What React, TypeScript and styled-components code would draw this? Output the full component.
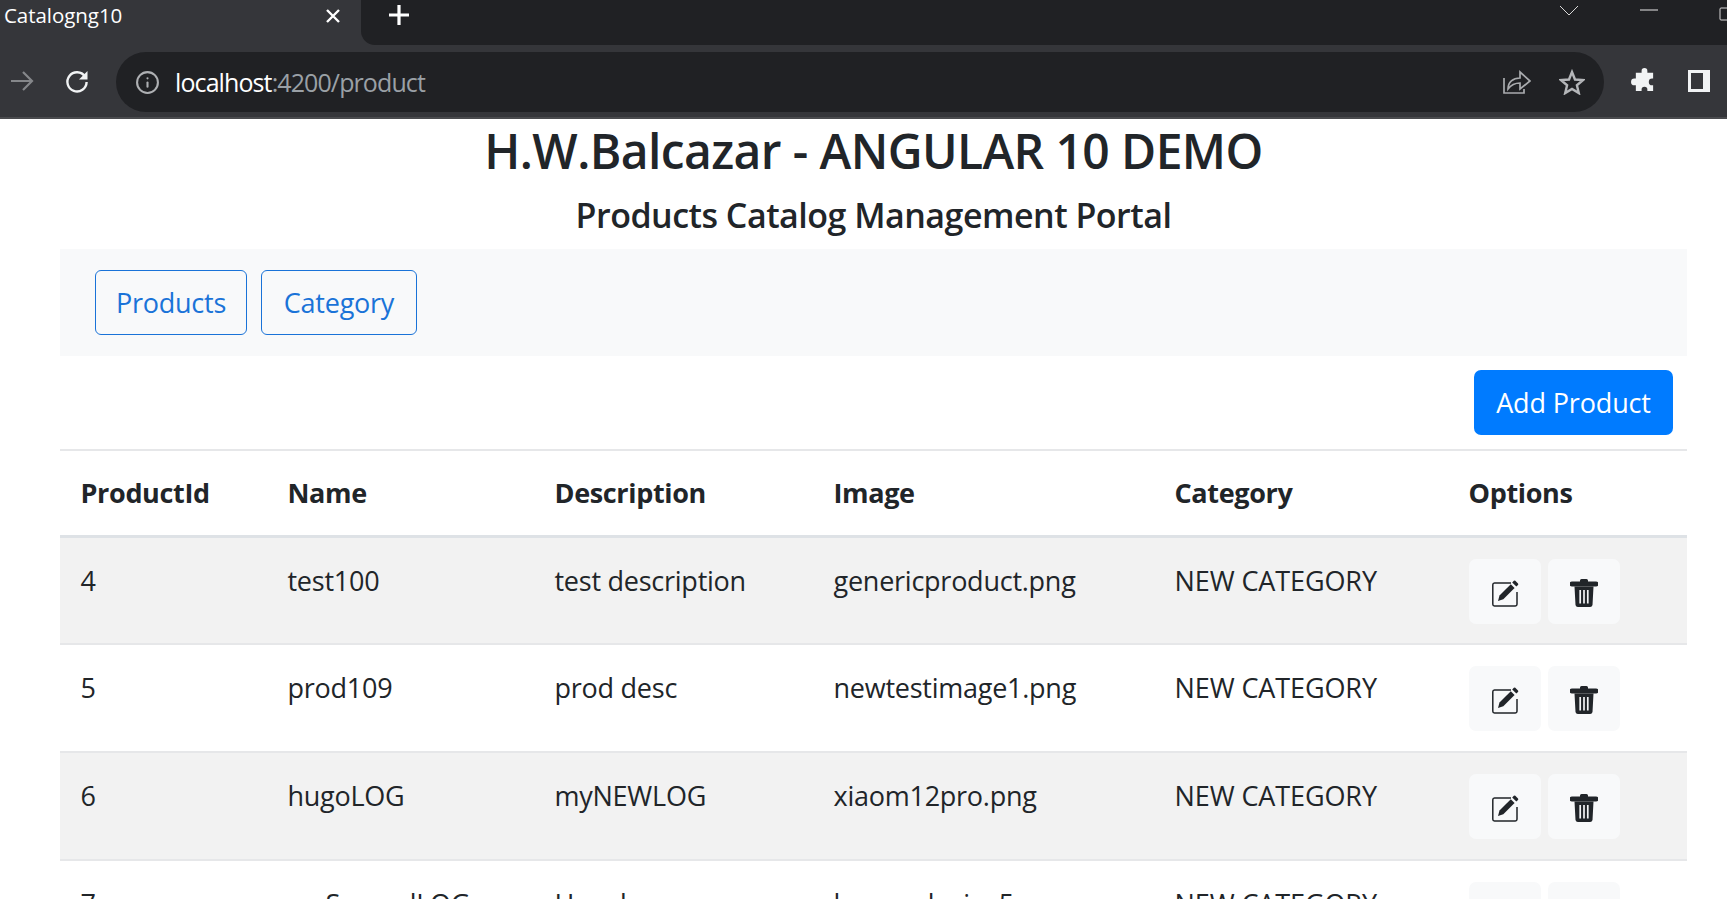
import React from "react";
import styled, { createGlobalStyle } from "styled-components";
import { FiInfo } from "react-icons/fi";

const Global = createGlobalStyle`
  html, body { margin: 0; padding: 0; height: 899px; overflow: hidden; background: #fff; }
  body { font-family: "Open Sans", "Noto Sans", "Liberation Sans", sans-serif; color: #212529; }
`;

const TabStrip = styled.div`
  display: flex; height: 45px; background: #35363a; color: #fff;
`;
const Tab = styled.div`
  width: 361px; display: flex; align-items: center; justify-content: space-between;
  padding: 0 20px 16px 4px; box-sizing: border-box; font-size: 20.500px; letter-spacing: -0.05px;
  svg { position: relative; top: 1px; }
`;
const StripRest = styled.div`
  flex: 1; background: #202124; border-bottom-left-radius: 14px;
  display: flex; align-items: flex-start; padding: 4px 0 0 27px;
  justify-content: space-between;
`;
const WindowControls = styled.div`
  display: flex; align-items: flex-start; gap: 61px; margin-right: -2px; padding-top: 1px;
`;
const Toolbar = styled.div`
  height: 74px; background: #35363a; border-bottom: 2px solid #4a4b4e;
  display: flex; align-items: flex-start; padding-top: 7px; box-sizing: border-box;
`;
const NavIcons = styled.div`
  width: 116px; display: flex; align-items: center; gap: 29px; padding: 16px 0 0 9px; box-sizing: border-box;
`;
const Omnibox = styled.div`
  width: 1488px; height: 60px; background: #202124; border-radius: 30px;
  display: flex; align-items: center; padding: 0 0 0 19px; box-sizing: border-box;
`;
const Url = styled.div`
  flex: 1; margin-left: 15px; font-size: 25px; letter-spacing: -0.9px; color: #9aa0a6;
  span { color: #fff; }
`;
const OmniActions = styled.div`
  display: flex; align-items: center; gap: 28px; padding-right: 19px;
`;
const ExtIcons = styled.div`
  display: flex; align-items: center; gap: 29px; padding: 16px 0 0 27px;
`;

const Page = styled.main`
  padding: 0 40px 0 60px;
`;
const Title = styled.h1`
  margin: 0 0 11px; height: 64px; line-height: 64px; text-align: center; font-size: 48px; font-weight: 600;
  letter-spacing: -0.6px; color: #212529;
`;
const Subtitle = styled.h4`
  margin: 0; height: 42px; line-height: 42px; text-align: center; font-size: 34px; font-weight: 600;
  letter-spacing: -0.5px; color: #212529;
`;
const NavBar = styled.nav`
  display: flex; gap: 14px; padding: 21px 35px; background: #f8f9fa; margin-top: 13px;
`;
const NavButton = styled.button<{ $w: number }>`
  width: ${(p) => p.$w}px; height: 65px; background: transparent; border: 1.1px solid #1a73d8;
  border-radius: 6px; color: #1a73d8; font: inherit; font-size: 27px; padding: 0;
  letter-spacing: -0.25px;
`;
const ActionBar = styled.div`
  display: flex; justify-content: flex-end; padding: 14px 14px 14px 0;
  border-bottom: 2px solid #e6e7e9;
`;
const AddButton = styled.button`
  width: 199px; height: 65px; background: #007bff; color: #fff; border: 0; border-radius: 7px;
  font: inherit; font-size: 27px; padding: 0; letter-spacing: -0.15px;
`;
const Table = styled.table`
  width: 1627px; table-layout: fixed; border-collapse: collapse; font-size: 27px; letter-spacing: -0.25px;
`;
const Col = styled.col<{ $w: number }>`
  width: ${(p) => p.$w}px;
`;
const Th = styled.th`
  height: 85px; padding: 0 0 0 20.500px; text-align: left; font-weight: 700; border-bottom: 3px solid #dee2e6;
  box-sizing: border-box; letter-spacing: -0.35px;
`;
const Row = styled.tr<{ $odd: boolean }>`
  background: ${(p) => (p.$odd ? "#f2f2f2" : "#fff")};
`;
const Td = styled.td`
  height: 108px; padding: 24px 0 0 20.500px; vertical-align: top; border-bottom: 2px solid #e6e7e9;
  box-sizing: border-box; line-height: 37px;
`;
const CategoryTd = styled(Td)`
  letter-spacing: -0.1px;
`;
const OptionsTd = styled(Td)`
  padding: 21px 0 0 21px;
`;
const Options = styled.div`
  display: flex; gap: 7px;
`;
const IconButton = styled.button`
  width: 72px; height: 65px; background: #f8f9fa; border: 0; border-radius: 7px; padding: 3px 0 0;
  display: flex; align-items: center; justify-content: center; color: #212529;
`;

const EditIcon = () => (
  <svg width="28" height="28" viewBox="0 0 28 28">
    <path d="M20 4H3.500A1.800 1.800 0 0 0 1.800 5.800v19.400a1.800 1.800 0 0 0 1.700 1.800h20.800a1.800 1.800 0 0 0 1.700-1.800V13" fill="none" stroke="#212529" strokeWidth="1.500" />
    <path d="M7 22l1.500-5.500L19.800 5.200l3.800 3.800L12.300 20.300z" fill="#212529" />
    <path d="M21.200 3.500l1.700-1.700a1 1 0 0 1 1.400 0l2.700 2.700a1 1 0 0 1 0 1.400L25.300 7.600z" fill="#212529" />
  </svg>
);

const TrashIcon = () => (
  <svg width="28" height="30" viewBox="0 0 28 30">
    <path d="M10 3.500V2.500A1.500 1.500 0 0 1 11.500 1h5A1.500 1.500 0 0 1 18 2.500v1h8a2 2 0 0 1 0 5H2a2 2 0 0 1 0-5z" fill="#212529" />
    <path d="M4.500 8.500h19l-1 18.500a2.500 2.500 0 0 1-2.500 2H8a2.500 2.500 0 0 1-2.500-2z" fill="#212529" />
    <path d="M10.200 12v13.500M14 12v13.500M17.800 12v13.500" stroke="#f2f3f4" strokeWidth="1.700" fill="none" />
  </svg>
);

const rows = [
  ["4", "test100", "test description", "genericproduct.png"],
  ["5", "prod109", "prod desc", "newtestimage1.png"],
  ["6", "hugoLOG", "myNEWLOG", "xiaom12pro.png"],
  ["7", "mySecondLOG", "Hoy de", "bgrproducips5.png"],
];

export default function App() {
  return (
    <>
      <Global />
      <TabStrip>
        <Tab>
          Catalogng10
          <svg width="16" height="16" viewBox="0 0 16 16" fill="none" stroke="#fff" strokeWidth="2.400"><path d="M2 2l12 12M14 2L2 14" /></svg>
        </Tab>
        <StripRest>
          <svg width="22" height="22" viewBox="0 0 22 22" fill="none" stroke="#fff" strokeWidth="3.200"><path d="M11 1v20M1 11h20" /></svg>
          <WindowControls>
            <svg width="20" height="12" viewBox="0 0 20 12" fill="none" stroke="#d8d8d8" strokeWidth="1"><path d="M1 1l9 9 9-9" /></svg>
            <svg width="18" height="10" viewBox="0 0 18 10" fill="none" stroke="#e8e8e8" strokeWidth="1"><path d="M0 5h18" /></svg>
            <svg width="10" height="16" viewBox="0 0 10 16" fill="none" stroke="#d8d8d8" strokeWidth="1"><path d="M10 3H2a1 1 0 0 0-1 1v10a1 1 0 0 0 1 1h8" /></svg>
          </WindowControls>
        </StripRest>
      </TabStrip>
      <Toolbar>
        <NavIcons>
          <svg width="26" height="26" viewBox="0 0 26 26" fill="none" stroke="#85878a" strokeWidth="2.200"><path d="M2 13h21M14 4l9 9-9 9" /></svg>
          <svg width="26" height="26" viewBox="0 0 26 26" fill="none"><path d="M21 8.500A9.600 9.600 0 1 0 22.600 14" stroke="#f1f3f4" strokeWidth="2.400" /><path d="M23.500 3v8.500H15z" fill="#f1f3f4" /></svg>
        </NavIcons>
        <Omnibox>
          <FiInfo size={25} color="#aeb0b3" />
          <Url><span>localhost</span>:4200/product</Url>
          <OmniActions>
            <svg width="28" height="26" viewBox="0 0 28 26" fill="none" stroke="#a9abae" strokeWidth="1.700"><path d="M1 9v15h20v-4" /><path d="M5 20c0-7 5-11 12-11V3l10 9-10 8v-6c-5 0-9 2-12 6z" /></svg>
            <svg width="26" height="26" viewBox="0 0 26 26" fill="none" stroke="#b4b6b9" strokeWidth="2.400"><path d="M13 3l3 7.500 8 .6-6.100 5.200 1.900 7.800L13 20l-6.800 4.100 1.900-7.800L2 11.100l8-.6z" /></svg>
          </OmniActions>
        </Omnibox>
        <ExtIcons>
          <svg width="26" height="26" viewBox="0 0 26 26" fill="#f1f3f4"><path d="M10 3a3 3 0 0 1 6 0v2h6v6h-1a3.500 3.500 0 0 0 0 7h1v6h-6v-1.500a3 3 0 0 0-6 0V24H4v-6H2.500a3.500 3.500 0 0 1 0-7H4V5h6z" transform="translate(1 0) scale(.96)" /></svg>
          <svg width="26" height="26" viewBox="0 0 26 26" fill="none"><rect x="2" y="2" width="22" height="22" fill="#f1f3f4" /><rect x="5" y="5" width="12" height="16" fill="#35363a" /></svg>
        </ExtIcons>
      </Toolbar>
      <Page>
        <Title>H.W.Balcazar - ANGULAR 10 DEMO</Title>
        <Subtitle>Products Catalog Management Portal</Subtitle>
        <NavBar>
          <NavButton $w={152}>Products</NavButton>
          <NavButton $w={156}>Category</NavButton>
        </NavBar>
        <ActionBar>
          <AddButton>Add Product</AddButton>
        </ActionBar>
        <Table>
          <colgroup>
            {[207, 267, 279, 341, 294, 239].map((w, i) => <Col key={i} $w={w} />)}
          </colgroup>
          <thead>
            <tr>
              {["ProductId", "Name", "Description", "Image", "Category", "Options"].map((h) => <Th key={h}>{h}</Th>)}
            </tr>
          </thead>
          <tbody>
            {rows.map((r, i) => (
              <Row key={r[0]} $odd={i % 2 === 0}>
                {r.map((c, j) => <Td key={j}>{c}</Td>)}
                <CategoryTd>NEW CATEGORY</CategoryTd>
                <OptionsTd>
                  <Options>
                    <IconButton><EditIcon /></IconButton>
                    <IconButton><TrashIcon /></IconButton>
                  </Options>
                </OptionsTd>
              </Row>
            ))}
          </tbody>
        </Table>
      </Page>
    </>
  );
}
